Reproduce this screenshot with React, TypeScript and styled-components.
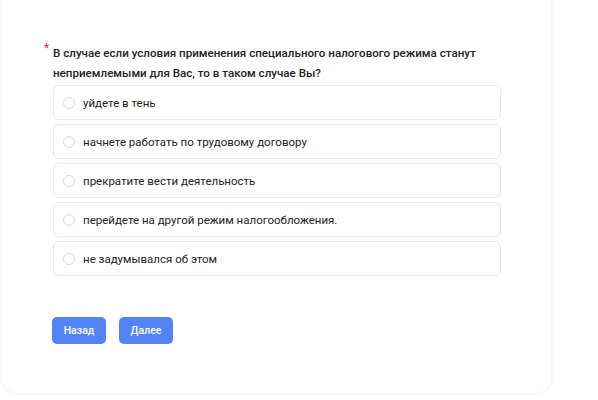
import React from "react";
import styled, { createGlobalStyle } from "styled-components";

const GlobalStyle = createGlobalStyle`
  html, body {
    margin: 0;
    padding: 0;
    background: #ffffff;
  }
  body {
    font-family: Roboto, "Liberation Sans", Arial, sans-serif;
    color: #222222;
  }
`;

const options = [
  "уйдете в тень",
  "начнете работать по трудовому договору",
  "прекратите вести деятельность",
  "перейдете на другой режим налогообложения.",
  "не задумывался об этом",
];

export default function App() {
  return (
    <>
      <GlobalStyle />
      <Page>
        <Card>
          <Question>
            <Required>*</Required>
            <QuestionText>
              В случае если условия применения специального налогового режима станут
              неприемлемыми для Вас, то в таком случае Вы?
            </QuestionText>
          </Question>
          <OptionList>
            {options.map((o) => (
              <Option key={o}>
                <Radio />
                <OptionLabel>{o}</OptionLabel>
              </Option>
            ))}
          </OptionList>
          <Buttons>
            <Button>Назад</Button>
            <Button>Далее</Button>
          </Buttons>
        </Card>
      </Page>
    </>
  );
}

const Page = styled.div`
  width: 598px;
  height: 400px;
  overflow: hidden;
  padding-left: 2px;
  box-sizing: border-box;
`;

const Card = styled.div`
  width: 549px;
  height: 413px;
  margin-top: -20px;
  box-sizing: border-box;
  padding: 63px 0 0 42px;
  background: #ffffff;
  border-radius: 16px;
  box-shadow: 0 0 5px rgba(0, 0, 0, 0.09);
`;

const Question = styled.div`
  display: flex;
  position: relative;
  padding-left: 9px;
`;

const Required = styled.span`
  position: absolute;
  left: 0;
  top: -2px;
  color: #e0245e;
  font-size: 12px;
`;

const QuestionText = styled.div`
  font-size: 11.6px;
  line-height: 20px;
  font-weight: 500;
  color: #222222;
  width: 430px;
`;

const OptionList = styled.div`
  display: flex;
  flex-direction: column;
  gap: 4px;
  margin-top: 2px;
  margin-left: 9px;
  width: 448px;
`;

const Option = styled.div`
  display: flex;
  align-items: center;
  gap: 8px;
  height: 35px;
  box-sizing: border-box;
  padding-left: 9px;
  border: 1px solid #e8e8e8;
  border-radius: 6px;
`;

const Radio = styled.span`
  width: 12px;
  height: 12px;
  box-sizing: border-box;
  border: 1px solid #d9d9d9;
  border-radius: 50%;
`;

const OptionLabel = styled.span`
  font-size: 11.5px;
  color: #222222;
`;

const Buttons = styled.div`
  display: flex;
  gap: 13px;
  margin-top: 41px;
  margin-left: 8px;
`;

const Button = styled.button`
  height: 27px;
  width: 54px;
  padding: 0;
  border: none;
  border-radius: 5px;
  background: #5282f5;
  color: #ffffff;
  font-family: Roboto, "Liberation Sans", Arial, sans-serif;
  font-size: 10.5px;
  font-weight: 500;
`;
